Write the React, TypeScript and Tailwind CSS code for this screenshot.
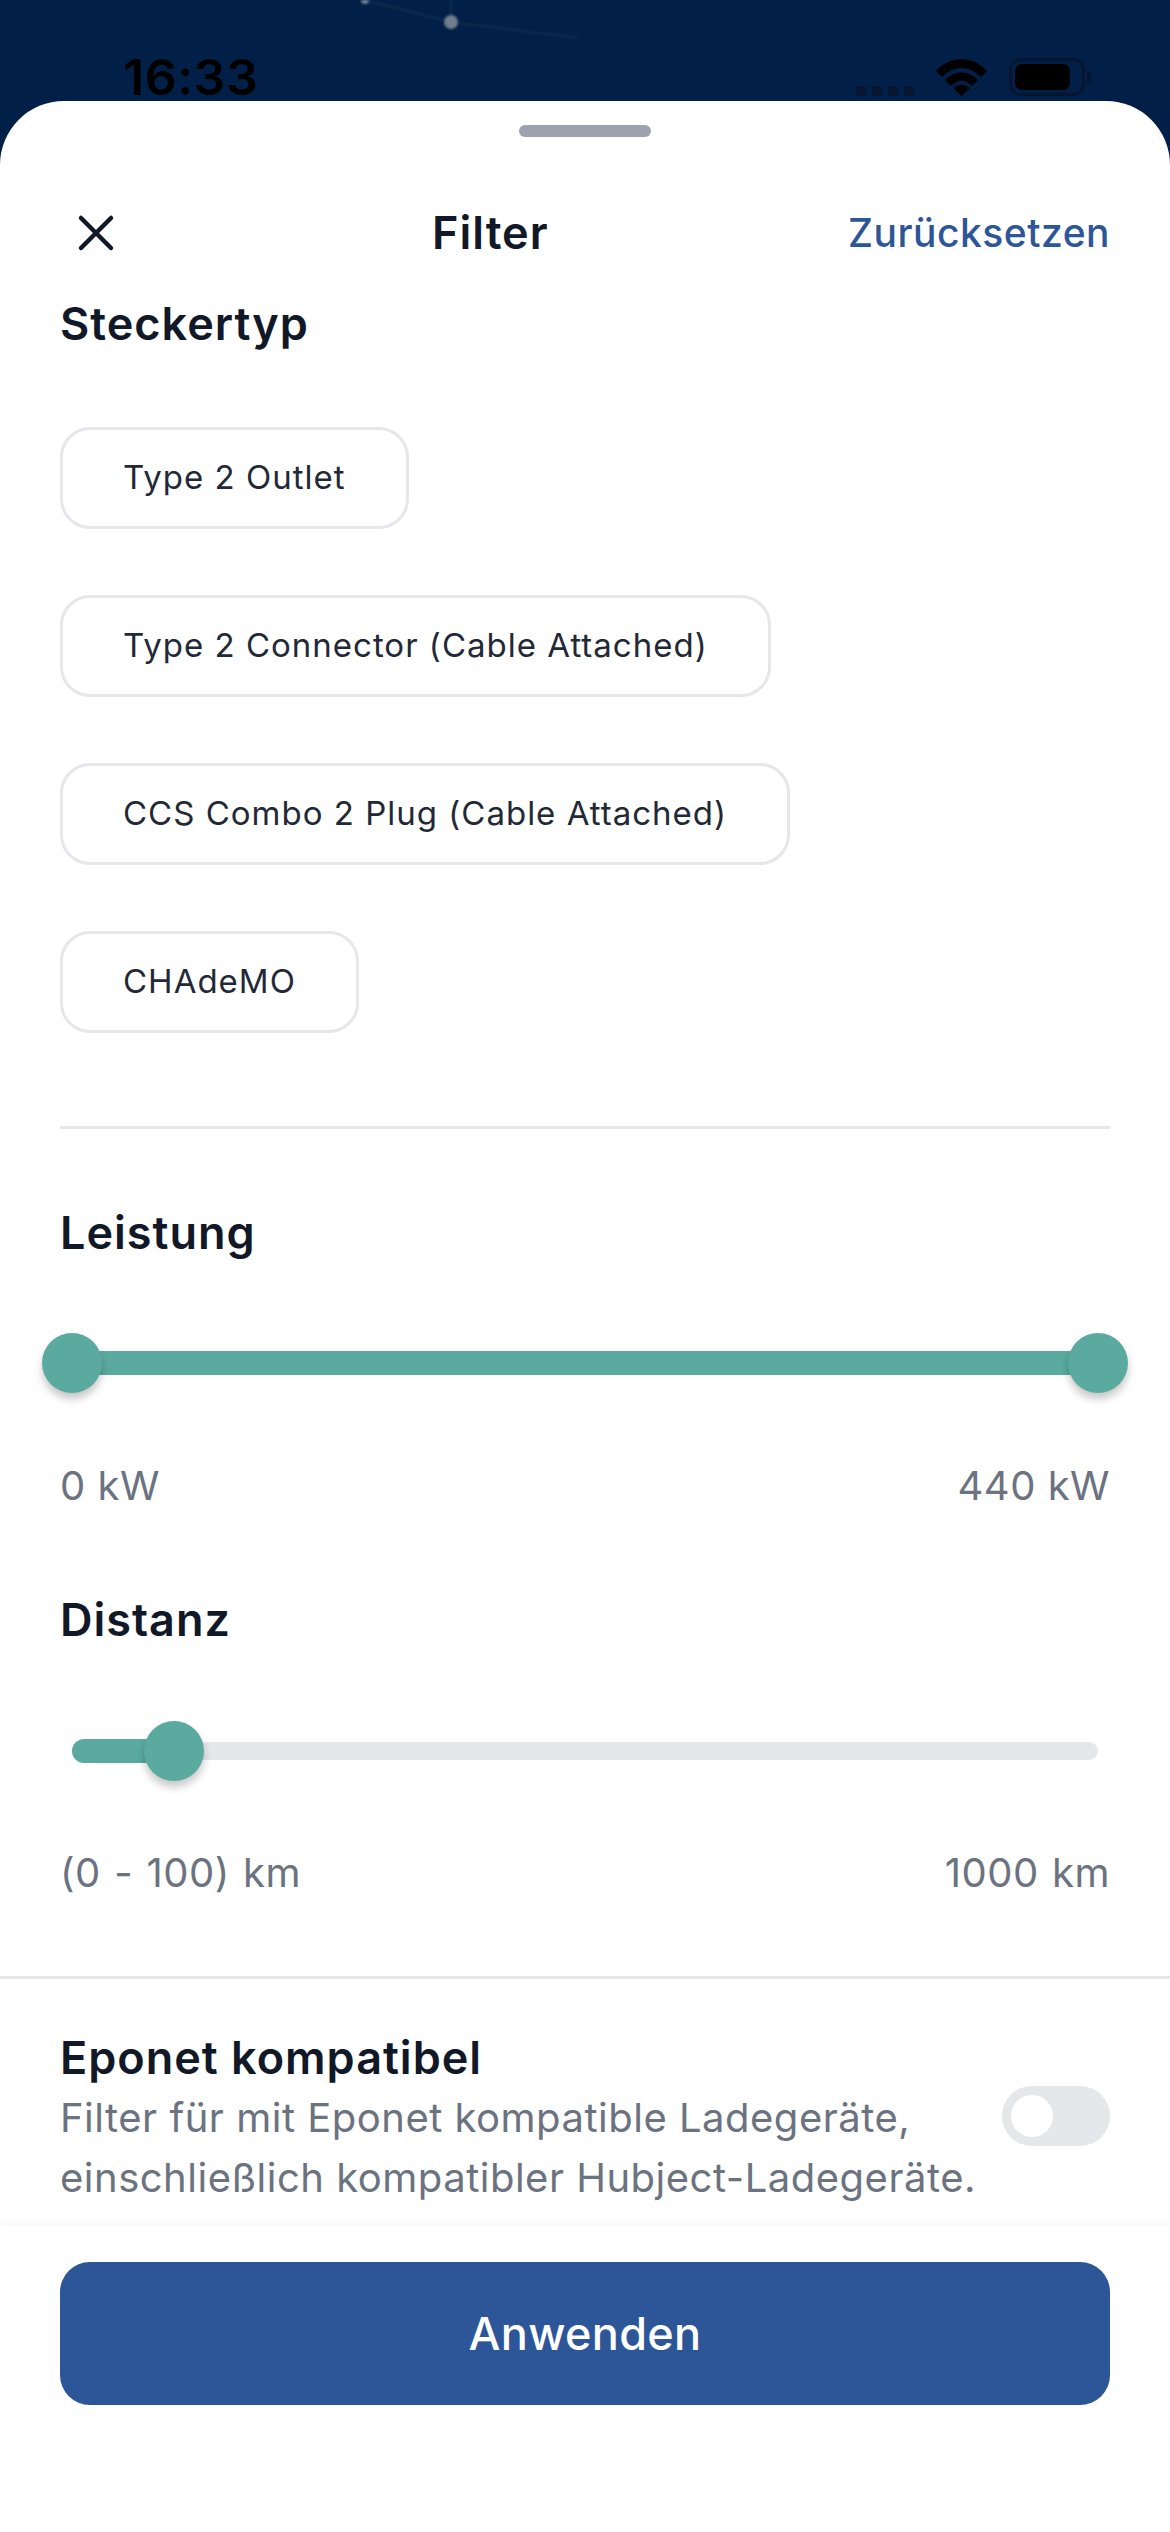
import React from 'react';

const chips = ['Type 2 Outlet', 'Type 2 Connector (Cable Attached)', 'CCS Combo 2 Plug (Cable Attached)', 'CHAdeMO'];

const Thumb: React.FC<{ className?: string }> = ({ className = '' }) => (
  <div className={`absolute top-1/2 -translate-y-1/2 w-[60px] h-[60px] rounded-full bg-[#5aaa9f] shadow-[0_6px_9px_rgba(0,0,0,0.22)] ${className}`} />
);

export default function App() {
  return (
    <div className="relative flex flex-col h-[2532px] w-[1170px] overflow-hidden bg-[#022047] font-['Inter',sans-serif]">
      {/* blurred map behind the sheet */}
      <svg className="absolute left-0 top-0 blur-[1px]" width="1170" height="101" viewBox="0 0 1170 101" fill="none">
        <path d="M365 0L451 22L578 38M451 0V22" stroke="#14304f" strokeWidth="1.5" />
        <circle cx="365" cy="0" r="4" fill="#75838f" />
        <circle cx="451" cy="22" r="7" fill="#6f7d8c" />
      </svg>

      {/* status bar */}
      <div className="relative flex items-end justify-between h-[101px] pl-[123px] pr-[79px] pb-[5px]">
        <span className="text-[50px] font-semibold leading-[38px] tracking-[0.5px] text-black">16:33</span>
        <div className="flex items-end">
          <div className="flex gap-[6px]">
            <div className="w-[10px] h-[10px] rounded-[3px] bg-[#061630]" />
            <div className="w-[10px] h-[10px] rounded-[3px] bg-[#061630]" />
            <div className="w-[10px] h-[10px] rounded-[3px] bg-[#061630]" />
            <div className="w-[10px] h-[10px] rounded-[3px] bg-[#061630]" />
          </div>
          <svg width="51" height="37" viewBox="0 0 51 37" className="ml-[22px]" fill="#000">
            <path d="M0 12C14 -4 37 -4 51 12L45 18C33 6 18 6 6 18Z" />
            <path d="M9 21C18 11 33 11 42 21L36 27C29 20 22 20 15 27Z" />
            <path d="M25.5 37L17 29C21 25 30 25 34 29Z" />
          </svg>
          <div className="flex items-center ml-[22px]">
            <div className="w-[76px] h-[38px] rounded-[12px] border-[3px] border-[#061630] p-[3px]">
              <div className="w-[55px] h-full rounded-[7px] bg-black" />
            </div>
            <div className="ml-[2px] w-[4px] h-[12px] rounded-r bg-[#061630]" />
          </div>
        </div>
      </div>

      {/* sheet */}
      <div className="relative flex-1 flex flex-col rounded-t-[64px] bg-white">
        <div className="mx-auto mt-[24px] h-[12px] w-[132px] rounded-full bg-[#9ca3af]" />

        <div className="relative flex items-center justify-between mt-[66px] h-[60px] pl-[77px] pr-[60px]">
          <svg width="38" height="38" viewBox="0 0 38 38" fill="none" stroke="#111827" strokeWidth="4.5" strokeLinecap="round">
            <path d="M4 4L34 34M34 4L4 34" />
          </svg>
          <span className="absolute left-[432px] text-[45px] font-semibold leading-[60px] tracking-[1px] text-[#111827]">Filter</span>
          <span className="text-[39px] font-medium leading-[60px] tracking-[0.5px] text-[#2d5698]">Zurücksetzen</span>
        </div>

        <div className="px-[60px] mt-[31px]">
          <h2 className="text-[45px] font-semibold leading-[60px] tracking-[1px] text-[#111827]">Steckertyp</h2>
          <div className="flex flex-col items-start gap-[66px] mt-[73px]">
            {chips.map((chip) => (
              <div key={chip} className="flex items-center h-[102px] px-[60px] rounded-[30px] border-[3px] border-[#e5e7eb] text-[33px] tracking-[1px] text-[#1f2937]">
                {chip}
              </div>
            ))}
          </div>
          <div className="mt-[93px] h-[3px] bg-[#e5e7eb]" />

          <h2 className="mt-[74px] text-[45px] font-semibold leading-[60px] tracking-[1px] text-[#111827]">Leistung</h2>
          <div className="relative mt-[88px] h-[24px] mx-[12px] bg-[#5aaa9f]">
            <Thumb className="left-[-30px]" />
            <Thumb className="right-[-30px]" />
          </div>
          <div className="flex justify-between mt-[81px] text-[40px] leading-[60px] tracking-[0.5px] text-[#6b7280]">
            <span>0 kW</span>
            <span>440 kW</span>
          </div>

          <h2 className="mt-[74px] text-[45px] font-semibold leading-[60px] tracking-[1px] text-[#111827]">Distanz</h2>
          <div className="relative flex items-center mt-[89px] h-[24px] mx-[12px]">
            <div className="h-[18px] w-full rounded-full bg-[#e5e7eb]" />
            <div className="absolute left-0 h-[24px] w-[114px] rounded-l-full bg-[#5aaa9f]" />
            <Thumb className="left-[72px]" />
          </div>
          <div className="flex justify-between mt-[80px] text-[40px] leading-[60px] tracking-[0.5px] [word-spacing:1.6px] text-[#6b7280]">
            <span>(0 - 100) km</span>
            <span>1000 km</span>
          </div>
        </div>

        <div className="mt-[73px] h-[3px] bg-[#e5e7eb]" />

        <div className="flex items-center justify-between px-[60px] mt-[49px]">
          <div>
            <h2 className="text-[45px] font-semibold leading-[60px] tracking-[1px] text-[#111827]">Eponet kompatibel</h2>
            <p className="text-[40px] leading-[60px] tracking-[0.5px] text-[#6b7280]">
              Filter für mit Eponet kompatible Ladegeräte,
              <br />
              einschließlich kompatibler Hubject-Ladegeräte.
            </p>
          </div>
          <div className="flex items-center w-[108px] h-[60px] mb-[4px] px-[9px] rounded-full bg-[#e5e7eb]">
            <div className="w-[42px] h-[42px] rounded-full bg-white" />
          </div>
        </div>

        {/* footer */}
        <div className="mt-auto h-[306px] px-[60px] pt-[36px] bg-white shadow-[0_-4px_12px_rgba(0,0,0,0.03)]">
          <button className="w-full h-[143px] rounded-[30px] bg-[#2d5698] text-[45px] font-medium tracking-[0.3px] text-white">Anwenden</button>
        </div>
      </div>
    </div>
  );
}
